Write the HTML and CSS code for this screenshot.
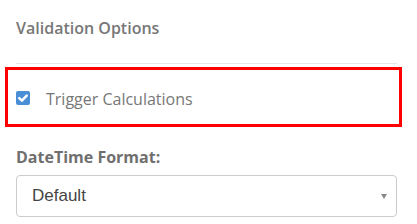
FILE: index.html
```
<!DOCTYPE html>
<html>
<head>
<meta charset="utf-8">
<link rel="stylesheet" href="styles.css">
</head>
<body>
<div class="panel">
  <div class="section-title">Validation Options</div>
  <div class="divider"></div>
  <div class="highlight">
    <label class="check-row">
      <span class="checkbox">
        <svg viewBox="0 0 14 14" width="14" height="14"><path d="M3.3 7.2 L5.9 9.7 L10.7 4.6" fill="none" stroke="#fff" stroke-width="2.5" stroke-linecap="round" stroke-linejoin="round"/></svg>
      </span>
      <span class="check-label">Trigger Calculations</span>
    </label>
  </div>
  <div class="field-label">DateTime Format:</div>
  <div class="select">
    <span class="select-value">Default</span>
    <span class="select-arrow"></span>
  </div>
</div>
</body>
</html>
```
FILE: styles.css
```
html, body {
  margin: 0;
  padding: 0;
  background: #fff;
}
.panel {
  padding: 17px 20px 0 16px;
  font-family: "Open Sans", "Liberation Sans", sans-serif;
}
.section-title {
  font-size: 16px;
  font-weight: 600;
  color: #777;
  line-height: 22px;
}
.divider {
  height: 1px;
  background: #e6e6e6;
  margin-top: 24px;
}
.highlight {
  margin: 3px -5px 0 -11px;
  border: 3px solid #ff0000;
  height: 52px;
  padding-left: 8px;
  padding-top: 2px;
  display: flex;
  align-items: center;
}
.check-row {
  display: flex;
  align-items: center;
  gap: 16px;
}
.checkbox {
  width: 14px;
  height: 14px;
  border-radius: 2px;
  background: #4a8fd6;
  display: flex;
  align-items: center;
  justify-content: center;
}
.checkbox svg {
  display: block;
}
.check-label {
  font-size: 16px;
  color: #777;
  line-height: 20px;
  padding-top: 2px;
}
.field-label {
  margin-top: 19px;
  font-size: 16px;
  font-weight: 700;
  color: #6f6f6f;
  line-height: 22px;
}
.select {
  margin-top: 7px;
  height: 40px;
  border: 1px solid #ccc;
  border-radius: 4px;
  display: flex;
  align-items: center;
  justify-content: space-between;
  padding: 0 9px 0 15px;
}
.select-value {
  font-family: "Liberation Sans", Arial, sans-serif;
  font-size: 17px;
  color: #444;
}
.select-arrow {
  width: 0;
  height: 0;
  border-left: 3.5px solid transparent;
  border-right: 3.5px solid transparent;
  border-top: 5px solid #888;
}
```
